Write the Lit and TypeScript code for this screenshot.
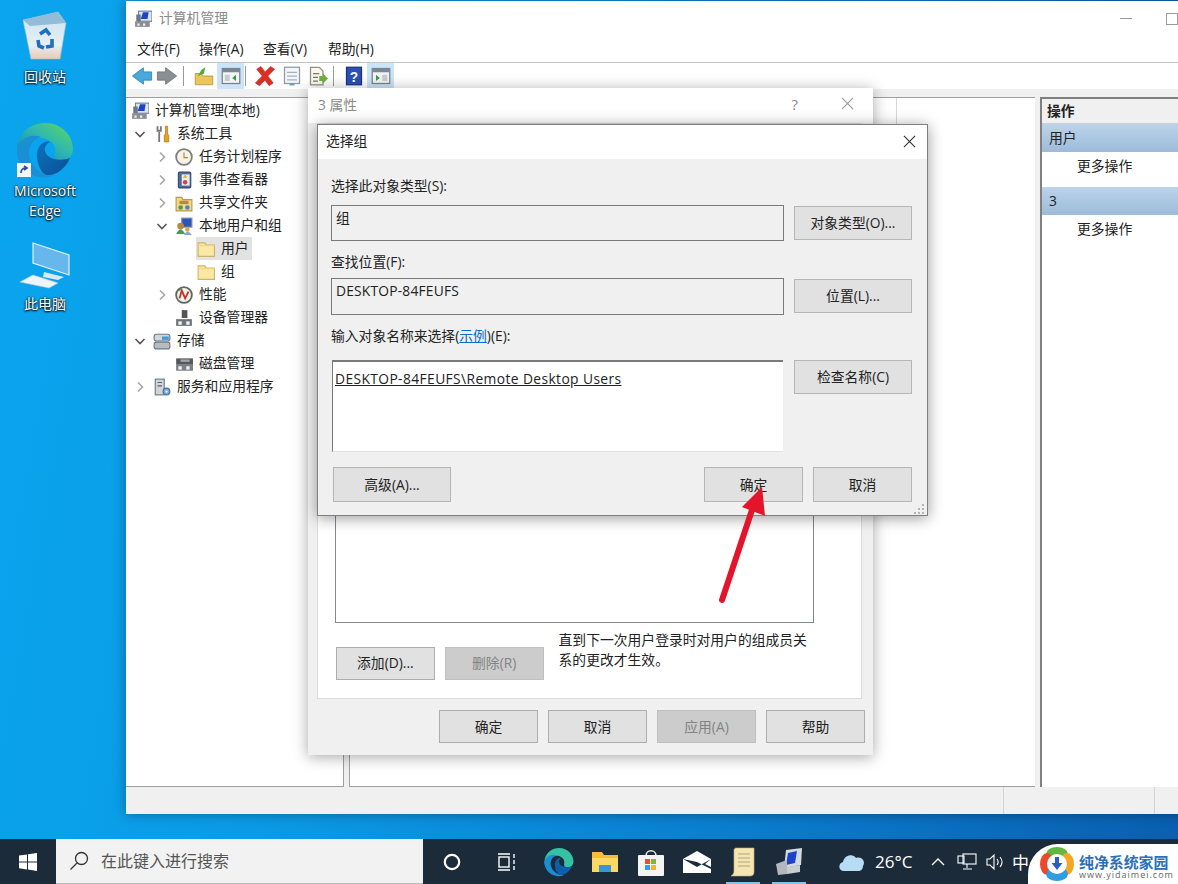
import {html, css, svg, LitElement} from 'lit';
import {customElement} from 'lit/decorators.js';
import {classMap} from 'lit/directives/class-map.js';

const icon = (size: number, body: unknown, box = 16) =>
  html`<svg width=${size} height=${size} viewBox="0 0 ${box} ${box}">${body}</svg>`;

const mmcIcon = icon(18, svg`
  <rect x="4" y="1" width="12" height="9" fill="#dfe6f2" stroke="#6d7f99"/>
  <path d="M6 8 L8 2 L13 2 L12 8Z" fill="#1c44c8"/>
  <rect x="1" y="10" width="13" height="5" fill="#8b8f94"/>
  <rect x="3" y="12" width="2" height="2" fill="#eee"/><rect x="8" y="12" width="2" height="2" fill="#eee"/>
  <path d="M2 4 h4 v6 h-4z" fill="#6d7788"/>`);
const toolsIcon = icon(18, svg`
  <path d="M4 1 v5 M7 1 v5 M4 5 h3 M5.5 6 V15" stroke="#777" stroke-width="1.6" fill="none"/>
  <path d="M11 1 h2 v7 l1 1 v6 h-4 v-6 l1-1z" fill="#e5a21b" stroke="#8c6410" stroke-width=".5"/>`);
const clockIcon = icon(18, svg`
  <circle cx="8" cy="8" r="7" fill="#f6f3e6" stroke="#7e7e80" stroke-width="1.6"/>
  <path d="M8 4 V8.5 H11.5" stroke="#a08a4a" fill="none"/>`);
const eventIcon = icon(18, svg`
  <rect x="3" y="1" width="11" height="14" rx="1" fill="#4d6c9c" stroke="#37486a"/>
  <rect x="6" y="3" width="7" height="10" fill="#e9edf4"/>
  <path d="M9 3 L11 6 H7z" fill="#e2b11f"/><circle cx="9" cy="10" r="2" fill="#d0463e"/>`);
const shareIcon = icon(18, svg`
  <path d="M1 3 H6 L7 5 H15 V15 H1Z" fill="#f1d98a" stroke="#b89a48"/>
  <circle cx="5" cy="12" r="2" fill="#4c9a4c"/><circle cx="11" cy="12" r="2" fill="#4f7fc4"/>
  <rect x="4" y="6" width="8" height="3" fill="#b5893c"/>`);
const usersIcon = icon(18, svg`
  <rect x="6" y="1" width="9" height="8" fill="#2c55b8" stroke="#7d8ca8"/>
  <circle cx="5" cy="8" r="3" fill="#b58a3e"/><path d="M1 15 Q5 7 9 15Z" fill="#4a9a50"/>
  <circle cx="11" cy="11" r="2" fill="#d9a441"/><path d="M8 16 Q11 10 15 16Z" fill="#8ba5d0"/>`);
const folderIcon = icon(18, svg`
  <path d="M1 2.5 H7 L8 4.5 H15.5 V14.5 H1Z" fill="#fbe8a5" stroke="#cfb36a"/>
  <path d="M1 5 H15.5" stroke="#f0d583"/>`);
const perfIcon = icon(18, svg`
  <circle cx="8" cy="8" r="7" fill="#eef2ec" stroke="#5b6a5d" stroke-width="1.6"/>
  <path d="M4 11 L6 4 L9 11 L12 5" stroke="#c9302c" stroke-width="1.6" fill="none"/>
  <path d="M3 4 L5 3" stroke="#2d8f3e"/>`);
const deviceIcon = icon(18, svg`
  <rect x="6" y="1" width="5" height="7" fill="#555"/>
  <rect x="1" y="9" width="14" height="6" fill="#70747a"/>
  <rect x="3" y="11" width="3" height="3" fill="#f2f2f2"/><rect x="10" y="11" width="3" height="3" fill="#f2f2f2"/>`);
const storageIcon = icon(18, svg`
  <rect x="1" y="2" width="14" height="6" rx="2" fill="#cfd6dc" stroke="#6d7a85"/>
  <rect x="8" y="4" width="6" height="3" fill="#3f9bd9"/>
  <rect x="1" y="9" width="14" height="6" rx="2" fill="#b5bcc2" stroke="#6d7a85"/>`);
const diskIcon = icon(18, svg`
  <rect x="1" y="3" width="15" height="5" fill="#57595c"/><rect x="5" y="4" width="8" height="2" fill="#a8aaac"/>
  <rect x="1" y="8" width="15" height="6" fill="#7d8084"/>
  <rect x="3" y="10" width="3" height="3" fill="#eee"/><rect x="10" y="10" width="3" height="3" fill="#eee"/>`);
const serviceIcon = icon(18, svg`
  <rect x="2" y="1" width="8" height="14" fill="#cfd5db" stroke="#6d7a85"/>
  <path d="M4 4 H8 M4 7 H8" stroke="#5a6570"/>
  <circle cx="12" cy="12" r="3" fill="#7fa8d6" stroke="#486f9e"/><circle cx="12" cy="12" r="1" fill="#fff"/>`);

type TreeItem = {label: string; level: number; icon: unknown; chevron?: 'open' | 'closed'; selected?: boolean};

const tree: TreeItem[] = [
  {label: '计算机管理(本地)', level: 0, icon: mmcIcon},
  {label: '系统工具', level: 1, icon: toolsIcon, chevron: 'open'},
  {label: '任务计划程序', level: 2, icon: clockIcon, chevron: 'closed'},
  {label: '事件查看器', level: 2, icon: eventIcon, chevron: 'closed'},
  {label: '共享文件夹', level: 2, icon: shareIcon, chevron: 'closed'},
  {label: '本地用户和组', level: 2, icon: usersIcon, chevron: 'open'},
  {label: '用户', level: 3, icon: folderIcon, selected: true},
  {label: '组', level: 3, icon: folderIcon},
  {label: '性能', level: 2, icon: perfIcon, chevron: 'closed'},
  {label: '设备管理器', level: 2, icon: deviceIcon},
  {label: '存储', level: 1, icon: storageIcon, chevron: 'open'},
  {label: '磁盘管理', level: 2, icon: diskIcon},
  {label: '服务和应用程序', level: 1, icon: serviceIcon, chevron: 'closed'},
];

const chevron = (dir?: 'open' | 'closed') =>
  dir === 'open'
    ? html`<svg width="16" height="16" viewBox="0 0 16 16"><path d="M3.5 6 L8 10.5 L12.5 6" fill="none" stroke="#555" stroke-width="1.6"/></svg>`
    : dir === 'closed'
      ? html`<svg width="16" height="16" viewBox="0 0 16 16"><path d="M6 3.5 L10.5 8 L6 12.5" fill="none" stroke="#a6a6a6" stroke-width="1.6"/></svg>`
      : html`<svg width="16" height="16"></svg>`;

const toolbarIcons = {
  back: icon(22, svg`<path d="M1 8 L9 2 V5 H15 V11 H9 V14Z" fill="#4aa8dc" stroke="#2c7fb0" stroke-width=".6"/>`),
  forward: icon(22, svg`<path d="M15 8 L7 2 V5 H1 V11 H7 V14Z" fill="#8b8f93" stroke="#6c7074" stroke-width=".6"/>`),
  up: icon(20, svg`<path d="M1 6 H6 L7 8 H15 V15 H1Z" fill="#ecc659" stroke="#a88a35" stroke-width=".6"/><path d="M3 8 L6 3 L9 1 L8 6Z" fill="#52a63f"/>`),
  tree: icon(20, svg`<rect x="1" y="2" width="14" height="12" fill="#f3f3f3" stroke="#79828c"/><rect x="1" y="2" width="14" height="3" fill="#7a8794"/><path d="M3 7 h4 v5 h-4z" fill="#c4ccd4"/><path d="M12 7 L9 9.5 L12 12Z" fill="#2f9e4c"/>`),
  del: icon(22, svg`<path d="M2 3 L5 1 L8 5 L12 1 L15 3 L10 8 L14 13 L11 15 L8 11 L4 15 L1 13 L6 8Z" fill="#dd2e24" stroke="#a8231c" stroke-width=".4"/>`),
  props: icon(20, svg`<rect x="2" y="1" width="12" height="13" fill="#f4f6f8" stroke="#8e9aa6"/><path d="M4 5 H12 M4 8 H12 M4 11 H12" stroke="#a4b0bc"/><path d="M6 15 h4" stroke="#3f8fd0"/>`),
  exportList: icon(20, svg`<path d="M2 1 H9 L12 4 V15 H2Z" fill="#faf8ee" stroke="#8f8f84"/><path d="M4 6 H9 M4 9 H8 M4 12 H8" stroke="#77786e"/><path d="M9 8 H12 V6 L16 10 L12 14 V12 H9Z" fill="#6fb23e"/>`),
  help: icon(20, svg`<rect x="2" y="1" width="12" height="14" fill="#2b4fb5" stroke="#1c3480"/><text x="8" y="12.5" text-anchor="middle" font-size="11" font-weight="700" fill="#fff" font-family="Liberation Sans">?</text>`),
  panel: icon(20, svg`<rect x="1" y="2" width="14" height="12" fill="#f3f3f3" stroke="#79828c"/><rect x="1" y="2" width="14" height="3" fill="#7a8794"/><path d="M9 7 h4 v5 h-4z" fill="#c4ccd4"/><path d="M4 7 L7 9.5 L4 12Z" fill="#2f9e4c"/>`),
};

const closeX = (size: number, color: string) =>
  html`<svg width=${size} height=${size} viewBox="0 0 14 14"><path d="M1 1 L13 13 M13 1 L1 13" stroke=${color} stroke-width="1.2" fill="none"/></svg>`;

@customElement('desktop-icons')
export class DesktopIcons extends LitElement {
  static styles = css`
    :host {
      display: flex;
      flex-direction: column;
      align-items: center;
      width: 90px;
      color: #fff;
      font-size: 14px;
      line-height: 20px;
      text-shadow: 0 1px 2px #000, 0 0 2px #000;
    }
    .item {
      display: flex;
      flex-direction: column;
      align-items: center;
      text-align: center;
    }
    .bin {
      margin-top: 11px;
      height: 111px;
    }
    .edge {
      height: 120px;
    }
    svg {
      display: block;
    }
    .edge svg {
      margin-bottom: 3px;
    }
    .bin svg {
      margin-bottom: 6px;
    }
    .pc svg {
      margin-bottom: 2px;
    }
  `;

  render() {
    return html`
      <div class="item bin">
        <svg width="46" height="50" viewBox="0 0 46 50">
          <defs>
            <linearGradient id="bin" x1="0" y1="0" x2="0" y2="1">
              <stop offset="0" stop-color="#c9e3f2" /><stop offset=".7" stop-color="#e6eff3" /><stop offset="1" stop-color="#e6cbb8" />
            </linearGradient>
          </defs>
          <path d="M1 9 L36 1 L44 12 L38 48 H9Z" fill="url(#bin)" stroke="#9cc0d6" stroke-width=".6" />
          <path d="M1 9 L36 1 L44 12 L8 15Z" fill="#92bcd8" />
          <path d="M18 23 L24 19 L28 24 M30 28 L30 35 L24 36 M16 29 L17 35 L22 37" stroke="#1f6fc0" stroke-width="3.6" fill="none" />
        </svg>
        <span>回收站</span>
      </div>
      <div class="item edge">
        <svg width="58" height="56" viewBox="0 0 58 56">
          <defs>
            <linearGradient id="edgeTop" x1="0" y1="1" x2="1" y2="0">
              <stop offset="0" stop-color="#0f7fc6" /><stop offset=".55" stop-color="#2fb8b0" /><stop offset="1" stop-color="#5fdc55" />
            </linearGradient>
            <linearGradient id="edgeLow" x1="0" y1="0" x2="1" y2="1">
              <stop offset="0" stop-color="#0c72bb" /><stop offset="1" stop-color="#0b4f96" />
            </linearGradient>
          </defs>
          <path d="M1 28 C1 12 14 1 29 1 C46 1 57 14 57 27 C57 36 49 40 42 38 C37 37 40 30 39 26 C37 18 27 14 18 17 C8 20 3 27 1 34Z" fill="url(#edgeTop)" />
          <path d="M1 28 C3 18 14 11 25 15 C17 17 12 25 13 33 C14 43 24 54 38 53 C33 56 27 56 24 55 C10 53 0 41 1 28Z" fill="#1a8fd4" />
          <path d="M21 33 C21 24 28 18 34 20 C29 22 27 28 31 33 C35 38 46 39 54 36 C50 46 40 54 31 53 C25 52 21 42 21 33Z" fill="url(#edgeLow)" />
          <rect x="1" y="41" width="14" height="14" fill="#f4f6f8" />
          <path d="M5 51 C5 47 7 46 10 46 M8 44 L11 46 L8 48" stroke="#1e4fa0" stroke-width="1.6" fill="none" />
        </svg>
        <span>Microsoft<br />Edge</span>
      </div>
      <div class="item pc">
        <svg width="50" height="50" viewBox="0 0 50 50">
          <path d="M13 1 L49 13 V33 L13 21Z" fill="#66b7ec" stroke="#dff1fb" stroke-width="1.2" />
          <path d="M24 30 L44 35 L38 38 L23 35Z" fill="#dbe8f0" />
          <path d="M0 40 L13 33 L38 41 L29 46Z" fill="#eef4f8" stroke="#b8ccd8" stroke-width=".6" />
        </svg>
        <span>此电脑</span>
      </div>
    `;
  }
}

@customElement('mmc-window')
export class MmcWindow extends LitElement {
  static styles = css`
    :host {
      display: flex;
      flex-direction: column;
      height: 100%;
      background: #f0f0f0;
      color: #222;
      font-size: 13.8px;
    }
    .title {
      display: flex;
      align-items: center;
      gap: 7px;
      height: 35px;
      padding-left: 8px;
      background: #fff;
      color: #8a8a8a;
      flex: none;
    }
    .title-text {
      padding-bottom: 4px;
    }
    .controls {
      margin-left: auto;
      display: flex;
    }
    .controls span {
      width: 46px;
      display: flex;
      justify-content: center;
      align-items: center;
    }
    .min {
      width: 12px;
      height: 1px;
      background: #999;
    }
    .max {
      width: 10px;
      height: 10px;
      border: 1px solid #999;
    }
    .menu {
      display: flex;
      height: 26px;
      align-items: center;
      padding-left: 11px;
      background: #fff;
      border-bottom: 1px solid #c4c4c4;
      flex: none;
    }
    .menu span {
      padding-bottom: 2px;
      width: 65px;
    }
    .menu span:first-child {
      width: 62px;
    }
    .menu span:nth-child(2) {
      width: 64px;
    }
    .toolbar {
      display: flex;
      align-items: center;
      height: 26px;
      padding-left: 3px;
      background: #fff;
      flex: none;
    }
    .tool {
      width: 25px;
      height: 26px;
      display: flex;
      align-items: center;
      justify-content: center;
      flex: none;
    }
    .tool.wide {
      width: 27px;
    }
    .tool.on {
      background: #cce4f7;
    }
    .sep {
      width: 1px;
      height: 20px;
      background: #9a9a9a;
      margin: 0 6px 0 4px;
    }
    .sep.tight {
      margin: 0 5px 0 1px;
    }
    .sep.mid {
      margin: 0 6px 0 3px;
    }
    .body {
      flex: 1;
      display: flex;
      gap: 5px;
      padding-top: 8px;
      min-height: 0;
    }
    .tree {
      box-sizing: border-box;
      width: 218px;
      background: #fff;
      border: solid #a0a0a0;
      border-width: 1px 1px 1px 0;
      padding-top: 1px;
      flex: none;
    }
    .row {
      display: flex;
      align-items: center;
      height: 23px;
      white-space: nowrap;
    }
    .row svg {
      display: block;
      flex: none;
    }
    .l0 {
      margin-left: -16px;
    }
    .l1 {
      margin-left: 6px;
    }
    .l2 {
      margin-left: 28px;
    }
    .l3 {
      margin-left: 50px;
    }
    .label {
      display: flex;
      align-items: center;
      gap: 6px;
      height: 23px;
      margin-left: 5px;
      padding-right: 3px;
    }
    .label span {
      padding-bottom: 4px;
    }
    .label.selected {
      background: #e2e2e2;
      margin-left: 4px;
      padding-left: 1px;
    }
    .center {
      width: 685px;
      background: #fff;
      border: 1px solid #a0a0a0;
      border-width: 1px 0 1px 1px;
      flex: none;
    }
    .head {
      width: 546px;
      height: 26px;
      border-right: 1px solid #d8d8d8;
    }
    .actions {
      flex: 1;
      background: #fff;
      border: solid #808080;
      border-width: 2px 0 0 2px;
    }
    .actions-title {
      height: 24px;
      padding-left: 5px;
      line-height: 24px;
      background: #f0f0f0;
      font-weight: 700;
      border-bottom: 1px solid #d0d0d0;
    }
    .band {
      height: 28px;
      line-height: 28px;
      padding-left: 7px;
      background: linear-gradient(#bcd3ea, #9cbbd9);
    }
    .more {
      height: 35px;
      line-height: 28px;
      padding-left: 35px;
    }
    .status {
      display: flex;
      justify-content: flex-end;
      height: 27px;
      flex: none;
    }
    .status span {
      border-left: 1px solid #d4d4d4;
    }
    .s1 {
      width: 150px;
    }
    .s2 {
      width: 86px;
    }
  `;

  render() {
    return html`
      <div class="title">
        ${mmcIcon}<span class="title-text">计算机管理</span>
        <div class="controls">
          <span><i class="min"></i></span>
          <span><i class="max"></i></span>
          <span></span>
        </div>
      </div>
      <div class="menu"><span>文件(F)</span><span>操作(A)</span><span>查看(V)</span><span>帮助(H)</span></div>
      <div class="toolbar">
        <div class="tool">${toolbarIcons.back}</div>
        <div class="tool">${toolbarIcons.forward}</div>
        <i class="sep"></i>
        <div class="tool wide">${toolbarIcons.up}</div>
        <div class="tool wide on">${toolbarIcons.tree}</div>
        <i class="sep tight"></i>
        <div class="tool wide">${toolbarIcons.del}</div>
        <div class="tool wide">${toolbarIcons.props}</div>
        <div class="tool">${toolbarIcons.exportList}</div>
        <i class="sep mid"></i>
        <div class="tool wide">${toolbarIcons.help}</div>
        <div class="tool wide on">${toolbarIcons.panel}</div>
      </div>
      <div class="body">
        <div class="tree">
          ${tree.map(
            (item) => html`
              <div class="row">
                <span class="l${item.level}">${chevron(item.chevron)}</span>
                <div class=${classMap({label: true, selected: !!item.selected})}>${item.icon}<span>${item.label}</span></div>
              </div>
            `
          )}
        </div>
        <div class="center"><div class="head"></div></div>
        <div class="actions">
          <div class="actions-title">操作</div>
          <div class="band">用户</div>
          <div class="more">更多操作</div>
          <div class="band">3</div>
          <div class="more">更多操作</div>
        </div>
      </div>
      <div class="status"><span class="s1"></span><span class="s2"></span></div>
    `;
  }
}

@customElement('properties-dialog')
export class PropertiesDialog extends LitElement {
  static styles = css`
    :host {
      display: flex;
      flex-direction: column;
      height: 100%;
      background: #f0f0f0;
      color: #222;
      font-size: 13.8px;
    }
    .title {
      display: flex;
      align-items: center;
      height: 35px;
      padding: 0 19px 0 10px;
      background: #fff;
      color: #8a8a8a;
      flex: none;
    }
    .title span {
      padding-bottom: 4px;
    }
    .title svg {
      margin-bottom: 4px;
    }
    .title .q {
      margin-left: auto;
      margin-right: 43px;
      font-size: 15px;
    }
    .panel {
      flex: 1;
      display: flex;
      flex-direction: column;
      margin: 0 11px 0 9px;
      padding: 30px 47px 20px 17px;
      background: #fff;
      border: 1px solid #dcdcdc;
      min-height: 0;
    }
    .list {
      flex: 1;
      border: 1px solid #828790;
    }
    .bottom {
      display: flex;
      height: 55px;
      padding-left: 1px;
      flex: none;
    }
    .bottom button:first-child {
      margin-right: 10px;
    }
    button {
      font: inherit;
      color: inherit;
      padding: 0 0 2px;
      width: 99px;
      height: 33px;
      background: #e1e1e1;
      border: 1px solid #adadad;
    }
    button.off {
      background: #cccccc;
      border-color: #bfbfbf;
      color: #838383;
    }
    .bottom button {
      margin-top: 24px;
      padding-bottom: 4px;
    }
    .note {
      width: 256px;
      margin-left: 15px;
      margin-top: 7px;
      line-height: 20px;
    }
    .footer {
      display: flex;
      justify-content: flex-end;
      gap: 10px;
      padding: 11px 8px 12px 0;
      flex: none;
    }
  `;

  render() {
    return html`
      <div class="title">
        <span>3 属性</span><span class="q">?</span>${closeX(13, '#9a9a9a')}
      </div>
      <div class="panel">
        <div class="list"></div>
        <div class="bottom">
          <button>添加(D)...</button>
          <button class="off">删除(R)</button>
          <div class="note">直到下一次用户登录时对用户的组成员关系的更改才生效。</div>
        </div>
      </div>
      <div class="footer">
        <button>确定</button><button>取消</button><button class="off">应用(A)</button><button>帮助</button>
      </div>
    `;
  }
}

@customElement('select-group-dialog')
export class SelectGroupDialog extends LitElement {
  static styles = css`
    :host {
      display: block;
      height: 100%;
      box-sizing: border-box;
      background: #f0f0f0;
      color: #222;
      font-size: 13.8px;
      border: 1px solid #7f7f7f;
    }
    .title {
      display: flex;
      align-items: center;
      justify-content: space-between;
      height: 34px;
      padding: 0 11px 0 8px;
      background: #fff;
    }
    .title span {
      padding-bottom: 4px;
    }
    .title svg {
      margin-bottom: 1px;
    }
    .body {
      position: relative;
      padding: 17px 15px 0 13px;
    }
    .label {
      height: 20px;
      line-height: 20px;
    }
    .grid {
      display: grid;
      grid-template-columns: 453px 118px;
      column-gap: 10px;
      align-items: start;
    }
    .field {
      box-sizing: border-box;
      border: 1px solid #7a7a7a;
      padding: 2px 4px;
      line-height: 20px;
      letter-spacing: 0.2px;
    }
    button {
      font: inherit;
      color: inherit;
      padding: 0 0 2px;
      height: 34px;
      background: #e1e1e1;
      border: 1px solid #b5b5b5;
    }
    .first {
      margin-top: 9px;
    }
    .first .field {
      height: 36px;
    }
    .second {
      margin-top: 6px;
    }
    .second .field {
      height: 37px;
    }
    .third {
      margin-top: 14px;
    }
    .gap {
      margin-top: 11px;
    }
    .grid button {
      margin-top: 1px;
    }
    .third button {
      margin-top: 0;
    }
    .names {
      box-sizing: border-box;
      height: 92px;
      margin-left: 1px;
      width: 451px;
      background: #fff;
      border-top: 2px solid #7a7a7a;
      border-left: 1px solid #7a7a7a;
      border-bottom: 1px solid #e2e2e2;
      padding: 7px 2px;
      line-height: 20px;
      letter-spacing: 0.4px;
      text-decoration: underline;
    }
    .link {
      color: #0a6cc4;
      text-decoration: underline;
    }
    .actions {
      display: flex;
      gap: 10px;
      margin: 15px 0 0 2px;
      width: 579px;
    }
    .actions button {
      height: 35px;
      width: 99px;
    }
    .actions .adv {
      width: 118px;
      margin-right: auto;
    }
    .grip {
      position: absolute;
      right: 1px;
      bottom: -13px;
      display: block;
    }
  `;

  render() {
    return html`
      <div class="title"><span>选择组</span>${closeX(13, '#333')}</div>
      <div class="body">
        <div class="label">选择此对象类型(S):</div>
        <div class="grid first"><div class="field">组</div><button>对象类型(O)...</button></div>
        <div class="label gap">查找位置(F):</div>
        <div class="grid second"><div class="field">DESKTOP-84FEUFS</div><button>位置(L)...</button></div>
        <div class="label gap">输入对象名称来选择(<span class="link">示例</span>)(E):</div>
        <div class="grid third"><div class="names">DESKTOP-84FEUFS\\Remote Desktop Users</div><button>检查名称(C)</button></div>
        <div class="actions">
          <button class="adv">高级(A)...</button><button>确定</button><button>取消</button>
        </div>
        <svg class="grip" width="12" height="12" viewBox="0 0 12 12" fill="#b4b4b4">
          <rect x="8" y="1" width="2" height="2" /><rect x="4" y="5" width="2" height="2" /><rect x="8" y="5" width="2" height="2" />
          <rect x="0" y="9" width="2" height="2" /><rect x="4" y="9" width="2" height="2" /><rect x="8" y="9" width="2" height="2" />
        </svg>
      </div>
    `;
  }
}

@customElement('win-taskbar')
export class WinTaskbar extends LitElement {
  static styles = css`
    :host {
      display: flex;
      align-items: stretch;
      position: relative;
      height: 45px;
      background: #1c2b3a;
      color: #fff;
      flex: none;
    }
    .start {
      width: 56px;
      display: flex;
      align-items: center;
      justify-content: center;
    }
    .search {
      width: 367px;
      display: flex;
      align-items: center;
      gap: 12px;
      padding-left: 13px;
      box-sizing: border-box;
      background: #f2f2f2;
      color: #555;
      font-size: 16px;
      border-bottom: 1px solid #bbb;
    }
    .search span {
      padding-bottom: 3px;
    }
    .slot {
      width: 46px;
      display: flex;
      align-items: center;
      justify-content: center;
      position: relative;
      flex: none;
    }
    .slot.wide {
      width: 55px;
    }
    .slot.lead {
      margin-left: 1px;
    }
    .slot.edge {
      margin-left: 2px;
    }
    .slot.active::after {
      content: '';
      position: absolute;
      left: 6px;
      right: 6px;
      bottom: 0;
      height: 2px;
      background: #7ec4ef;
    }
    .tray {
      display: flex;
      align-items: center;
      margin-left: 26px;
    }
    .temp {
      font-size: 17px;
      margin-left: 9px;
      width: 48px;
      white-space: nowrap;
    }
    .tray-icon {
      display: flex;
      width: 29px;
      justify-content: center;
    }
    .ime {
      font-size: 17px;
      margin-left: 2px;
    }
    .mark {
      position: absolute;
      left: 1028px;
      top: 5px;
      right: 0;
      bottom: 0;
      display: flex;
      align-items: center;
      gap: 5px;
      padding-left: 12px;
      background: #fff;
      border-radius: 30px 0 0 0;
    }
    .mark svg {
      flex: none;
    }
    .mark-text {
      padding-top: 6px;
    }
    .brand {
      color: #2a6fb8;
      font-size: 14.9px;
      font-weight: 700;
      line-height: 15px;
      white-space: nowrap;
    }
    .url {
      color: #666;
      font-size: 9px;
      line-height: 9px;
      letter-spacing: 1px;
      white-space: nowrap;
    }
    svg {
      display: block;
    }
  `;

  render() {
    return html`
      <div class="start">
        <svg width="18" height="18" viewBox="0 0 18 18" fill="#fff">
          <path d="M0 2.6 L8 1.5 V8.4 H0Z M9 1.3 L18 0 V8.4 H9Z M0 9.5 H8 V16.4 L0 15.3Z M9 9.5 H18 V18 L9 16.6Z" />
        </svg>
      </div>
      <div class="search">
        <svg width="20" height="20" viewBox="0 0 20 20" fill="none" stroke="#333" stroke-width="1.3">
          <circle cx="12.5" cy="7.5" r="6" /><path d="M8 12 L1.5 18.5" />
        </svg>
        <span>在此键入进行搜索</span>
      </div>
      <div class="slot wide lead">
        <svg width="18" height="18" viewBox="0 0 18 18"><circle cx="9" cy="9" r="7.2" fill="none" stroke="#fff" stroke-width="2.2" /></svg>
      </div>
      <div class="slot wide">
        <svg width="20" height="20" viewBox="0 0 20 20" fill="none" stroke="#fff" stroke-width="1.4">
          <path d="M1 2 H13 M1 18 H13" /><rect x="2" y="5" width="10" height="10" /><path d="M17 2 V6 M17 8 V12 M17 14 V18" />
        </svg>
      </div>
      <div class="slot edge">
        <svg width="30" height="30" viewBox="0 0 58 56">
          <path d="M1 28 C1 12 14 1 29 1 C46 1 57 14 57 27 C57 36 49 40 42 38 C37 37 40 30 39 26 C37 18 27 14 18 17 C8 20 3 27 1 34Z" fill="#35c1a4" />
          <path d="M1 28 C3 18 14 11 25 15 C17 17 12 25 13 33 C14 43 24 54 38 53 C33 56 27 56 24 55 C10 53 0 41 1 28Z" fill="#1a8fd4" />
          <path d="M21 33 C21 24 28 18 34 20 C29 22 27 28 31 33 C35 38 46 39 54 36 C50 46 40 54 31 53 C25 52 21 42 21 33Z" fill="#0c5fa8" />
        </svg>
      </div>
      <div class="slot">
        <svg width="26" height="24" viewBox="0 0 26 24">
          <path d="M0 2 H10 L12 5 H26 V22 H0Z" fill="#f4bd3a" /><rect x="0" y="8" width="26" height="14" fill="#fcd964" /><rect x="7" y="15" width="12" height="7" fill="#3c93d8" />
        </svg>
      </div>
      <div class="slot">
        <svg width="26" height="28" viewBox="0 0 26 28">
          <path d="M8 8 C8 1 18 1 18 8" fill="none" stroke="#e8e8e8" stroke-width="1.6" />
          <rect x="0" y="7" width="26" height="21" rx="1" fill="#f4f4f4" />
          <rect x="7" y="11" width="5" height="5" fill="#e8502e" /><rect x="13" y="11" width="5" height="5" fill="#7fba2a" />
          <rect x="7" y="17" width="5" height="5" fill="#2aa4e8" /><rect x="13" y="17" width="5" height="5" fill="#f6b81f" />
        </svg>
      </div>
      <div class="slot">
        <svg width="28" height="22" viewBox="0 0 28 22">
          <path d="M0 8 L14 0 L28 8 V22 H0Z" fill="#fff" /><path d="M0 8 L14 16 L28 8 L22 13 L28 16 V18 L14 11Z" fill="#1c2b3a" />
        </svg>
      </div>
      <div class="slot active">
        <svg width="26" height="30" viewBox="0 0 26 30">
          <path d="M6 1 H24 V25 C24 28 22 29 20 29 H1 C3 28 4 26 4 24 V3 C4 2 5 1 6 1Z" fill="#f3e6b4" stroke="#c9b36c" stroke-width=".6" />
          <path d="M8 7 H20 M8 11 H20 M8 15 H20 M8 19 H20" stroke="#b4a678" stroke-width="1.2" />
        </svg>
      </div>
      <div class="slot active">
        <svg width="28" height="30" viewBox="0 0 28 30">
          <path d="M11 3 L27 1 L26 18 L9 21Z" fill="#d4dae2" /><path d="M13 6 L22 4 L20 16 L11 18Z" fill="#1c44c8" />
          <path d="M1 17 L12 13 V27 L3 28Z" fill="#b4b8bd" /><path d="M12 20 L25 18 V25 L12 27Z" fill="#c9ccd1" />
        </svg>
      </div>
      <div class="tray">
        <svg width="28" height="20" viewBox="0 0 28 20">
          <path d="M6 19 C0 19 0 11 5 10 C6 3 15 1 18 6 C24 4 28 10 25 14 C25 17 23 19 20 19Z" fill="#b6dcf6" />
        </svg>
        <span class="temp">26°C</span>
        <span class="tray-icon">
          <svg width="14" height="14" viewBox="0 0 14 14"><path d="M1 10 L7 4 L13 10" fill="none" stroke="#fff" stroke-width="1.4" /></svg>
        </span>
        <span class="tray-icon">
          <svg width="20" height="18" viewBox="0 0 20 18" fill="none" stroke="#fff" stroke-width="1.1">
            <rect x="6" y="1" width="13" height="10" /><rect x="1" y="3" width="6" height="7" /><path d="M10 11 V15 M6 16 H15" />
          </svg>
        </span>
        <span class="tray-icon">
          <svg width="20" height="18" viewBox="0 0 20 18" fill="none" stroke="#fff" stroke-width="1.1">
            <path d="M1 6 H4 L8 2 V16 L4 12 H1Z M11 6 C12.5 8 12.5 10 11 12 M14 4 C16.5 7 16.5 11 14 14" />
          </svg>
        </span>
        <span class="ime">中</span>
      </div>
      <div class="mark">
        <svg width="34" height="34" viewBox="0 0 34 34">
          <ellipse cx="17" cy="7" rx="11" ry="7" fill="#62b83e" />
          <ellipse cx="7" cy="17" rx="7" ry="11" fill="#ea4a2a" />
          <ellipse cx="27" cy="17" rx="7" ry="11" fill="#f5a623" />
          <ellipse cx="17" cy="27" rx="11" ry="7" fill="#2f9be0" />
          <circle cx="17" cy="17" r="10" fill="#fff" />
          <path d="M15 10 H19 V16 H22.5 L17 23 L11.5 16 H15Z" fill="#2a5fc0" />
        </svg>
        <div class="mark-text">
          <div class="brand">纯净系统家园</div>
          <div class="url">www.yidaimei.com</div>
        </div>
      </div>
    `;
  }
}

@customElement('app-root')
export class AppRoot extends LitElement {
  static styles = css`
    :host {
      display: flex;
      flex-direction: column;
      width: 1178px;
      height: 884px;
      overflow: hidden;
      font-family: 'Open Sans', 'Noto Sans CJK SC', sans-serif;
    }
    .desktop {
      position: relative;
      flex: 1;
      overflow: hidden;
      background: linear-gradient(100deg, #0aa5ee 0%, #0b9be6 30%, #0a7fd0 65%, #0a5fb0 100%);
    }
    desktop-icons {
      position: absolute;
      left: 0;
      top: 0;
    }
    .window {
      position: absolute;
    }
    .mmc {
      left: 126px;
      top: 1px;
      width: 1115px;
      height: 813px;
      box-shadow: 0 0 12px rgba(0, 0, 0, 0.35);
    }
    .props {
      left: 308px;
      top: 88px;
      width: 565px;
      height: 667px;
      box-shadow: 0 2px 14px rgba(0, 0, 0, 0.35);
    }
    .select {
      left: 317px;
      top: 124px;
      width: 611px;
      height: 392px;
      box-shadow: 0 2px 14px rgba(0, 0, 0, 0.4);
    }
    .arrow {
      position: absolute;
      left: 710px;
      top: 480px;
    }
  `;

  render() {
    return html`
      <div class="desktop">
        <desktop-icons></desktop-icons>
        <mmc-window class="window mmc"></mmc-window>
        <properties-dialog class="window props"></properties-dialog>
        <select-group-dialog class="window select"></select-group-dialog>
        <svg class="arrow" width="70" height="130" viewBox="710 480 70 130">
          <path d="M722 600 L752 510" stroke="#e4152b" stroke-width="6" stroke-linecap="round" fill="none" />
          <path d="M762 487 L742 507 L765 516Z" fill="#e4152b" />
        </svg>
      </div>
      <win-taskbar></win-taskbar>
    `;
  }
}
